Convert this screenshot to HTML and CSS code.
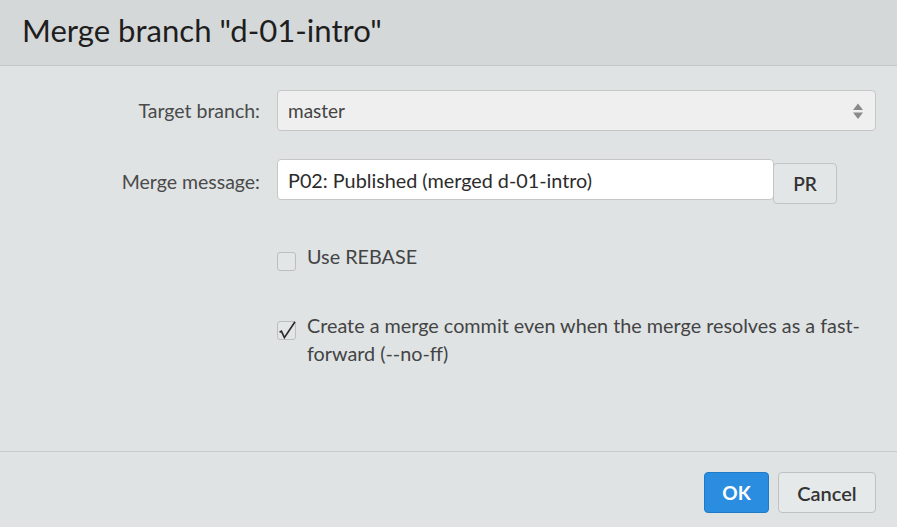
FILE: index.html
```html
<!DOCTYPE html>
<html>
<head>
<meta charset="utf-8">
<link rel="stylesheet" href="styles.css">
</head>
<body>
<div class="dialog">
  <div class="header"><h1 class="title">Merge branch "d-01-intro"</h1></div>
  <div class="content">
    <div class="form">
      <label class="label">Target branch:</label>
      <div class="select">
        <span class="select-value">master</span>
        <svg class="arrows" width="10" height="16" viewBox="0 0 10 16"><path d="M5 0.5 L10 7 H0 Z M5 16 L10 9.5 H0 Z" fill="#8a8a8a"/></svg>
      </div>
      <label class="label second-label">Merge message:</label>
      <div class="msg-row">
        <div class="input">P02: Published (merged d-01-intro)</div>
        <button class="btn pr">PR</button>
      </div>
      <div></div>
      <div class="check-row first">
        <span class="box"></span>
        <span class="check-text">Use REBASE</span>
      </div>
      <div></div>
      <div class="check-row second">
        <span class="box"><svg class="tick" width="19" height="19" viewBox="0 0 19 19"><path d="M2.6 11.2 L4.4 10.2 L7.4 16.6 L18 0.8" fill="none" stroke="#2b2b2b" stroke-width="1.7" stroke-linejoin="miter"/></svg></span>
        <span class="check-text">Create a merge commit even when the merge resolves as a fast-forward (--no-ff)</span>
      </div>
    </div>
  </div>
  <div class="footer">
    <button class="btn ok">OK</button>
    <button class="btn cancel">Cancel</button>
  </div>
</div>
</body>
</html>
```
FILE: styles.css
```css
html, body {
  margin: 0;
  padding: 0;
}
body {
  width: 897px;
  height: 527px;
  overflow: hidden;
  background: #dfe3e4;
  font-family: Lato, "Open Sans", sans-serif;
  color: #333;
}
.dialog {
  display: flex;
  flex-direction: column;
  height: 527px;
}
.header {
  height: 66px;
  background: #d5d8d9;
  border-bottom: 1px solid #c4c8c9;
  box-sizing: border-box;
  display: flex;
  align-items: center;
  padding: 0 0 6px 22px;
}
.title {
  margin: 0;
  font-weight: 400;
  font-size: 31.1px;
  color: #1e1e1e;
}
.content {
  flex: 1;
  padding: 24px 21px 0 0;
  border-bottom: 1px solid #c7cbcc;
}
.form {
  display: grid;
  grid-template-columns: 260px 1fr;
  column-gap: 17px;
  align-items: center;
}
.label {
  text-align: right;
  font-size: 19.5px;
  color: #4a4a4a;
}
.second-label {
  margin-top: 28px;
}
.select {
  height: 41px;
  box-sizing: border-box;
  background: #efefef;
  border: 1px solid #c6c6c6;
  border-radius: 4px;
  display: flex;
  align-items: center;
  justify-content: space-between;
  padding: 0 12px 0 10px;
  font-size: 19px;
  color: #444;
}
.arrows {
  display: block;
}
.msg-row {
  display: flex;
  align-items: flex-start;
  margin-top: 28px;
}
.input {
  width: 497px;
  height: 41px;
  box-sizing: border-box;
  background: #fff;
  border: 1px solid #c6c6c6;
  border-radius: 4px;
  display: flex;
  align-items: center;
  padding-left: 10px;
  font-size: 19.8px;
  color: #2c2c2c;
}
.btn {
  font-family: inherit;
  height: 41px;
  box-sizing: border-box;
  border-radius: 4px;
  font-size: 19px;
  cursor: pointer;
}
.pr {
  width: 64px;
  margin-left: -1px;
  margin-top: 4px;
  background: #e3e6e7;
  border: 1px solid #c2c4c5;
  color: #333;
  font-weight: 600;
}
.check-row {
  display: flex;
  align-items: flex-start;
  gap: 11px;
  font-size: 19.8px;
  line-height: 28px;
  color: #444;
}
.check-row.first {
  margin-top: 38px;
}
.check-row.second {
  margin-top: 40px;
}
.box {
  flex: none;
  position: relative;
  width: 19px;
  height: 19px;
  box-sizing: border-box;
  border: 1px solid #bcbebf;
  border-radius: 3px;
  background: #e3e6e7;
  margin-top: 10px;
}
.tick {
  position: absolute;
  left: -1px;
  top: -1px;
}
.check-text {
  padding-right: 10px;
}
.footer {
  height: 75px;
  box-sizing: border-box;
  display: flex;
  justify-content: flex-end;
  align-items: flex-start;
  gap: 9px;
  padding: 20px 21px 0 0;
}
.ok {
  width: 65px;
  background: #2b8de0;
  border: 1px solid #1f7bc8;
  color: #fff;
  font-weight: 700;
}
.cancel {
  width: 98px;
  background: #e6e9ea;
  border: 1px solid #bfc2c3;
  color: #333;
  font-size: 20px;
  font-weight: 600;
}
```
